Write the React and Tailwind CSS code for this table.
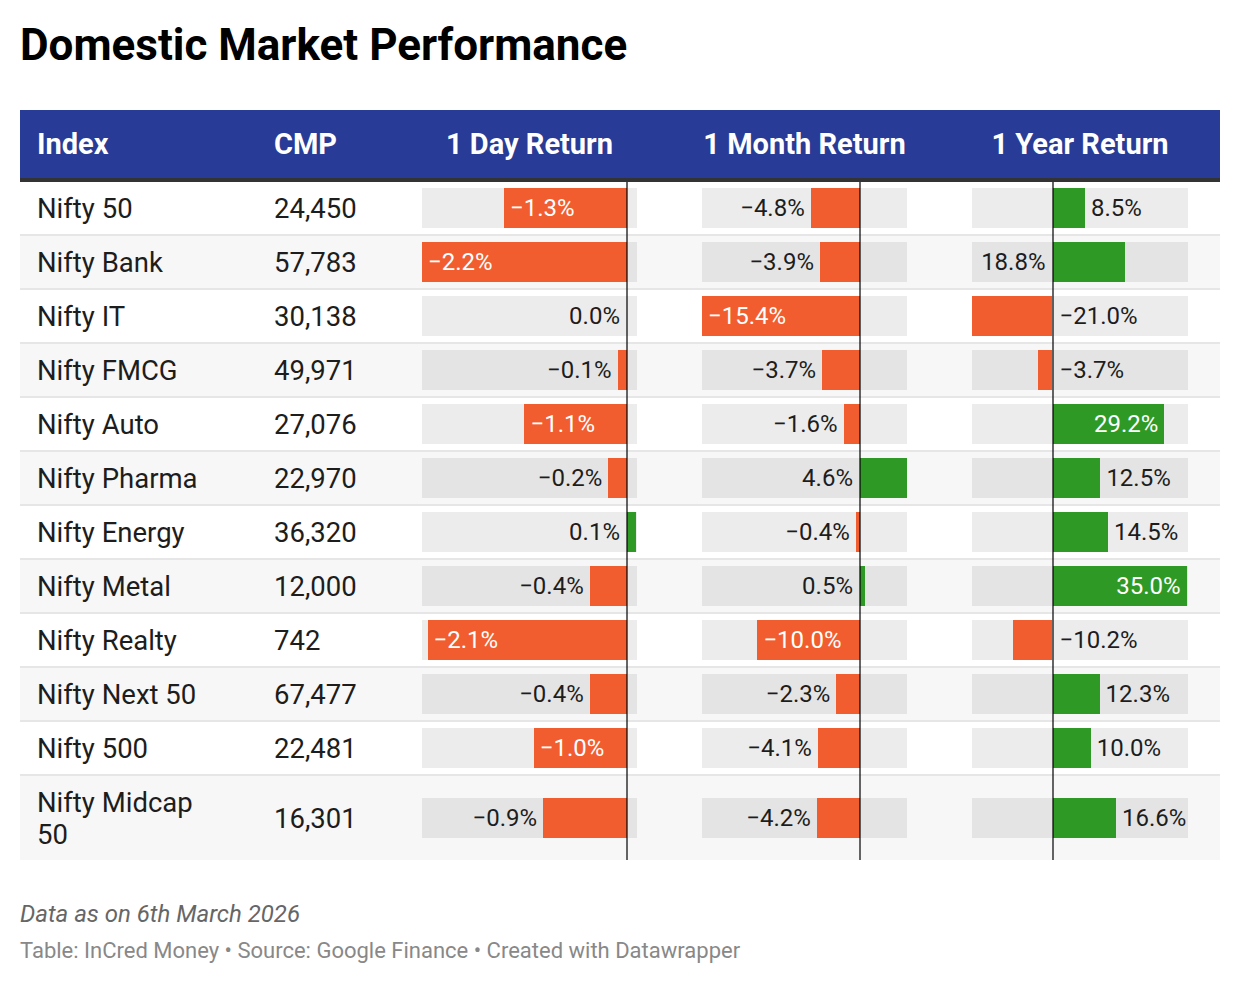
import React from "react";

const COLS = [
  { w: 215, z: 205, s: 93.2 },
  { w: 205, z: 158, s: 10.26 },
  { w: 216, z: 80.5, s: 3.83 },
];

const ROWS = [
  ["Nifty 50", "24,450", [-1.32, "i"], [-4.8, "o"], [8.5, "o"]],
  ["Nifty Bank", "57,783", [-2.2, "i"], [-3.9, "o"], [18.8, "x"]],
  ["Nifty IT", "30,138", [0.0, "x"], [-15.4, "i"], [-21.0, "x"]],
  ["Nifty FMCG", "49,971", [-0.1, "o"], [-3.7, "o"], [-3.7, "x"]],
  ["Nifty Auto", "27,076", [-1.1, "i"], [-1.6, "o"], [29.2, "i"]],
  ["Nifty Pharma", "22,970", [-0.2, "o"], [4.6, "x"], [12.5, "o"]],
  ["Nifty Energy", "36,320", [0.1, "x"], [-0.4, "o"], [14.5, "o"]],
  ["Nifty Metal", "12,000", [-0.4, "o"], [0.5, "x"], [35.0, "i"]],
  ["Nifty Realty", "742", [-2.14, "i"], [-10.0, "i"], [-10.2, "x"]],
  ["Nifty Next 50", "67,477", [-0.4, "o"], [-2.3, "o"], [12.3, "o"]],
  ["Nifty 500", "22,481", [-1.0, "i"], [-4.1, "o"], [10.0, "o"]],
  ["Nifty Midcap 50", "16,301", [-0.9, "o"], [-4.2, "o"], [16.6, "o"]],
];

function fmt(v) {
  return (v < 0 ? "\u2212" : "") + Math.abs(v).toFixed(1) + "%";
}

function BarCell({ v, mode, col, last }) {
  const neg = v < 0;
  const len = Math.abs(v) * col.s;
  const left = neg ? col.z - len : col.z;
  let labelStyle;
  const white = mode === "i";
  if (mode === "i") {
    labelStyle = neg ? { left: left + 6 } : { right: col.w - (col.z + len) + 6 };
  } else if (mode === "o") {
    labelStyle = neg ? { right: col.w - left + 6 } : { left: col.z + len + 6 };
  } else {
    labelStyle = neg ? { left: col.z + 7 } : { right: col.w - col.z + 7 };
  }
  return (
    <div className="relative flex items-center">
      <div className="relative h-[40px] bg-[rgba(0,0,0,0.075)]" style={{ width: col.w }}>
        <div
          className={`absolute top-0 bottom-0 ${neg ? "bg-[#f15d2e]" : "bg-[#2e9a25]"}`}
          style={{ left, width: len }}
        />
        <div
          className={`absolute inset-y-0 flex items-center whitespace-nowrap text-[24px] ${
            white ? "text-white" : "text-[#1d1d1d]"
          }`}
          style={labelStyle}
        >
          {fmt(v)}
        </div>
      </div>
      <div
        className={`absolute top-0 w-[2px] bg-[rgba(0,0,0,0.6)] ${last ? "bottom-0" : "bottom-[-2px]"}`}
        style={{ left: col.z - 1 }}
      />
    </div>
  );
}

export default function App() {
  return (
    <div className="w-[1240px] h-[984px] bg-white px-[20px] pt-[19px] font-[Roboto,sans-serif] text-[#1d1d1d]">
      <h1 className="text-[44px] leading-[52px] font-bold text-black">Domestic Market Performance</h1>

      <div className="mt-[39px] w-[1200px]">
        <div className="grid grid-cols-[254px_148px_280px_270px_248px] h-[66px] pt-[2px] items-center bg-[#283b96] text-white text-[29px] font-bold border-b-4 border-[#333333] box-content">
          <div className="pl-[17px]">Index</div>
          <div>CMP</div>
          <div className="w-[215px] text-center whitespace-nowrap">1 Day Return</div>
          <div className="w-[205px] text-center whitespace-nowrap">1 Month Return</div>
          <div className="w-[216px] text-center whitespace-nowrap">1 Year Return</div>
        </div>

        {ROWS.map((r, i) => {
          const last = i === ROWS.length - 1;
          return (
            <div
              key={r[0]}
              className={`grid grid-cols-[254px_148px_280px_270px_248px] ${
                i % 2 === 1 ? "bg-[#f7f7f7]" : "bg-white"
              } ${last ? "" : "border-b-2 border-[#e6e6e6]"}`}
            >
              <div className="pl-[17px] pt-[11px] pb-[9px] flex items-center">
                <div className="max-w-[185px] text-[27.5px] leading-[32px]">{r[0]}</div>
              </div>
              <div className="pt-[11px] pb-[9px] flex items-center text-[27.5px] leading-[32px]">{r[1]}</div>
              <BarCell v={r[2][0]} mode={r[2][1]} col={COLS[0]} last={last} />
              <BarCell v={r[3][0]} mode={r[3][1]} col={COLS[1]} last={last} />
              <BarCell v={r[4][0]} mode={r[4][1]} col={COLS[2]} last={last} />
            </div>
          );
        })}
      </div>

      <div className="mt-[40px] text-[24px] leading-[28px] italic text-[#666666]">Data as on 6th March 2026</div>
      <div className="mt-[9px] text-[22px] leading-[28px] text-[#888888]">
        Table: InCred Money • Source: Google Finance • Created with Datawrapper
      </div>
    </div>
  );
}
